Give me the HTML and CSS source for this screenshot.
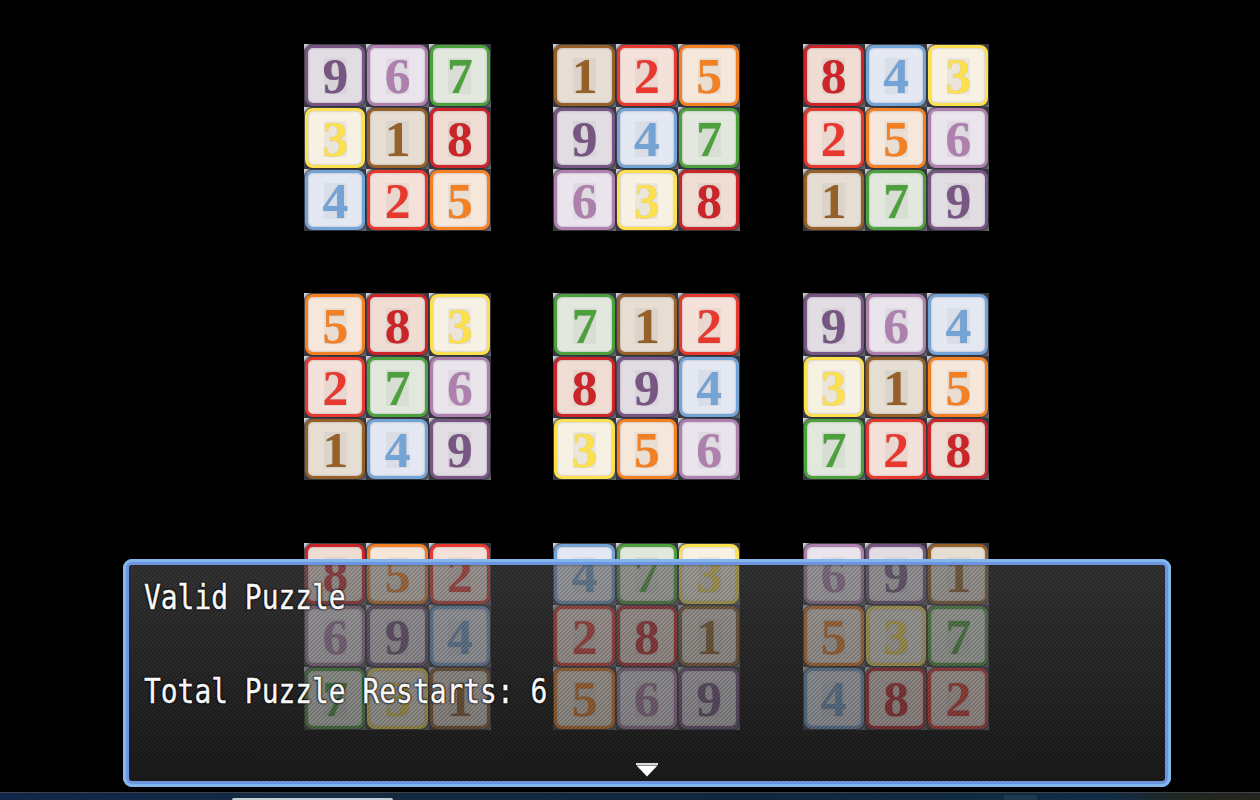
FILE: index.html
```
<!DOCTYPE html>
<html lang="en">
<head>
  <meta charset="UTF-8">
  <title>Sudoku</title>
  <link rel="stylesheet" href="styles.css">
</head>
<body>

<div class="stage">
  <div class="board" id="board"></div>

  <div class="message">
    <p class="line">Valid Puzzle</p>
    <p class="line"></p>
    <p class="line">Total Puzzle Restarts: 6</p>
    <svg class="pause" width="22" height="14" viewBox="0 0 22 14">
      <path d="M0 0H22V2H0Z" fill="#ddd"/>
      <path d="M0.5 2.5H21.5L11 13.5Z" fill="#fff"/>
    </svg>
  </div>
</div>

<div class="taskbar">
  <div class="task-window"></div>
  <div class="task-tray"></div>
</div>

<script>
  // one string per 3x3 box, left to right, top to bottom
  const boxes = [
    '967318425', '125947638', '843256179',
    '583276149', '712894356', '964315728',
    '852694731', '473281569', '691537482'
  ];

  const board = document.getElementById('board');

  boxes.forEach(numbers => {
    const box = document.createElement('div');
    box.className = 'box';
    for (const n of numbers) {
      const tile = document.createElement('div');
      tile.className = 'tile n' + n;
      tile.innerHTML = `<div class="face"><span class="digit">${n}</span></div>`;
      box.appendChild(tile);
    }
    board.appendChild(box);
  });
</script>

</body>
</html>
```
FILE: styles.css
```
* {margin:0;padding:0;box-sizing:border-box;}
body {
  height: 100vh;
  display: flex;
  flex-direction: column;
  overflow: hidden;
  background: #000;
}
.stage {
  flex: 1;
  min-height: 0;
  position: relative;
  padding: 44.3px 0 0 304.2px;
}

/* board */
.board {
  display: grid;
  grid-template-columns: repeat(3, 186.9px);
  grid-template-rows: repeat(3, 186.9px);
  gap: 62.3px;
}
.box {
  display: grid;
  grid-template-columns: repeat(3, 1fr);
  grid-template-rows: repeat(3, 1fr);
}
.tile {
  padding: 1px;
  background: linear-gradient(135deg, #dcdce2 0, #c0c0c8 3%, #44444c 6%, #2c2c34 92%, #77777f 100%);
}
.face {
  height: 100%;
  display: flex;
  justify-content: center;
  align-items: center;
  padding-top: 2px;
  border: 3px solid var(--c);
  border-radius: 8px;
  background: var(--bg);
  box-shadow: inset 0 0 2px rgba(70,60,90,0.45);
}
.digit {
  width: 23px;
  height: 36px;
  display: flex;
  justify-content: center;
  background: rgba(60,70,60,0.06);
  color: var(--c);
  font: bold 51.5px/36px "Liberation Serif", serif;
  text-shadow: 0 0 1px rgba(60,50,60,0.3);
}
.n1 { --c: #956128; --bg: #e6ddd3; }
.n2 { --c: #e9392f; --bg: #f4e1d9; }
.n3 { --c: #fce04e; --bg: #f6f1e3; }
.n4 { --c: #74a3d5; --bg: #e4e8f2; }
.n5 { --c: #f38023; --bg: #f5e7da; }
.n6 { --c: #ae80ad; --bg: #eae5ec; }
.n7 { --c: #4da13c; --bg: #e2e8dd; }
.n8 { --c: #cb2529; --bg: #efdcd3; }
.n9 { --c: #775684; --bg: #e2dde3; }

/* message window */
.message {
  position: absolute;
  left: 123px;
  top: 559px;
  width: 1048px;
  height: 228px;
  padding: 16px 15px;
  border: 6px solid #6c94df;
  border-radius: 9px;
  background:
    linear-gradient(135deg, rgba(255,255,255,0.04) 0 25%, rgba(0,0,0,0.1) 25% 50%, rgba(255,255,255,0.04) 50% 75%, rgba(0,0,0,0.1) 75%) 0 0 / 4px 4px padding-box,
    linear-gradient(rgba(80,80,80,0.57), rgba(38,38,38,0.57)) padding-box;
  box-shadow: inset 0 0 2px #222;
}
.message::before {
  content: "";
  position: absolute;
  inset: -6px;
  border: 3px solid #83b7ec;
  border-radius: 9px;
}
.line {
  height: 46.8px;
  color: #f8f8f8;
  font: 33.4px/34px "DejaVu Sans Mono", monospace;
  white-space: pre;
  transform: scaleX(0.836);
  transform-origin: 0 0;
  -webkit-text-stroke: 0.4px #f8f8f8;
  text-shadow: 0 0 2px #000, 0 0 2px #000, 0 0 3px #000;
}
.pause {
  position: absolute;
  left: 507px;
  bottom: 4px;
}

/* strip of the desktop below the game */
.taskbar {
  height: 8px;
  display: flex;
  justify-content: space-between;
  align-items: flex-end;
  padding: 0 223px 0 232px;
  border-top: 1px solid #3c4148;
  background: linear-gradient(90deg, #12264b 0, #132a40 25%, #10283f 60%, #112c45 88%, #22271f 94%, #25251f 100%);
}
.task-window {
  width: 161px;
  height: 2px;
  border-radius: 3px 3px 0 0;
  background: #c5ced6;
}
.task-tray {
  width: 33px;
  height: 5px;
  border-radius: 3px 3px 0 0;
  background: #1c3a50;
}
```
